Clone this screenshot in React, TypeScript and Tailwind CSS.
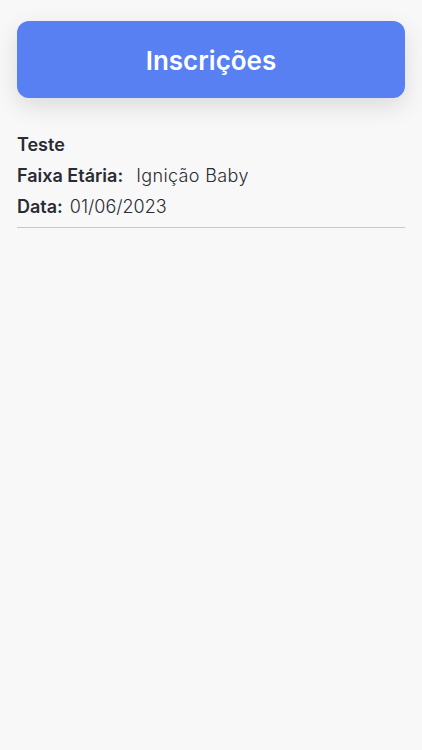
export default function App() {
  return (
    <div
      className="min-h-[750px] w-full bg-[#f8f8f8] px-[17px] pt-[21px] text-[#2b2b33]"
      style={{ fontFamily: "Inter, 'Open Sans', sans-serif" }}
    >
      <div className="flex h-[77px] items-center justify-center rounded-[12px] bg-[#5880f3] pt-[2px] shadow-[0_8px_24px_rgba(0,0,0,0.12)]">
        <h1 className="text-[26px] font-semibold text-white">Inscrições</h1>
      </div>

      <div className="mt-[36px] border-b border-[#c7c7cc] pb-[9px]">
        <p className="text-[18px] font-semibold leading-[22px]">Teste</p>
        <div className="mt-[9px] flex items-center text-[18px] leading-[22px]">
          <span className="font-semibold">Faixa Etária:</span>
          <span className="ml-[13px] font-light tracking-[0.02em]">Ignição Baby</span>
        </div>
        <div className="mt-[9px] flex items-center text-[18px] leading-[22px]">
          <span className="font-semibold">Data:</span>
          <span className="ml-[7px] font-light">01/06/2023</span>
        </div>
      </div>
    </div>
  );
}
